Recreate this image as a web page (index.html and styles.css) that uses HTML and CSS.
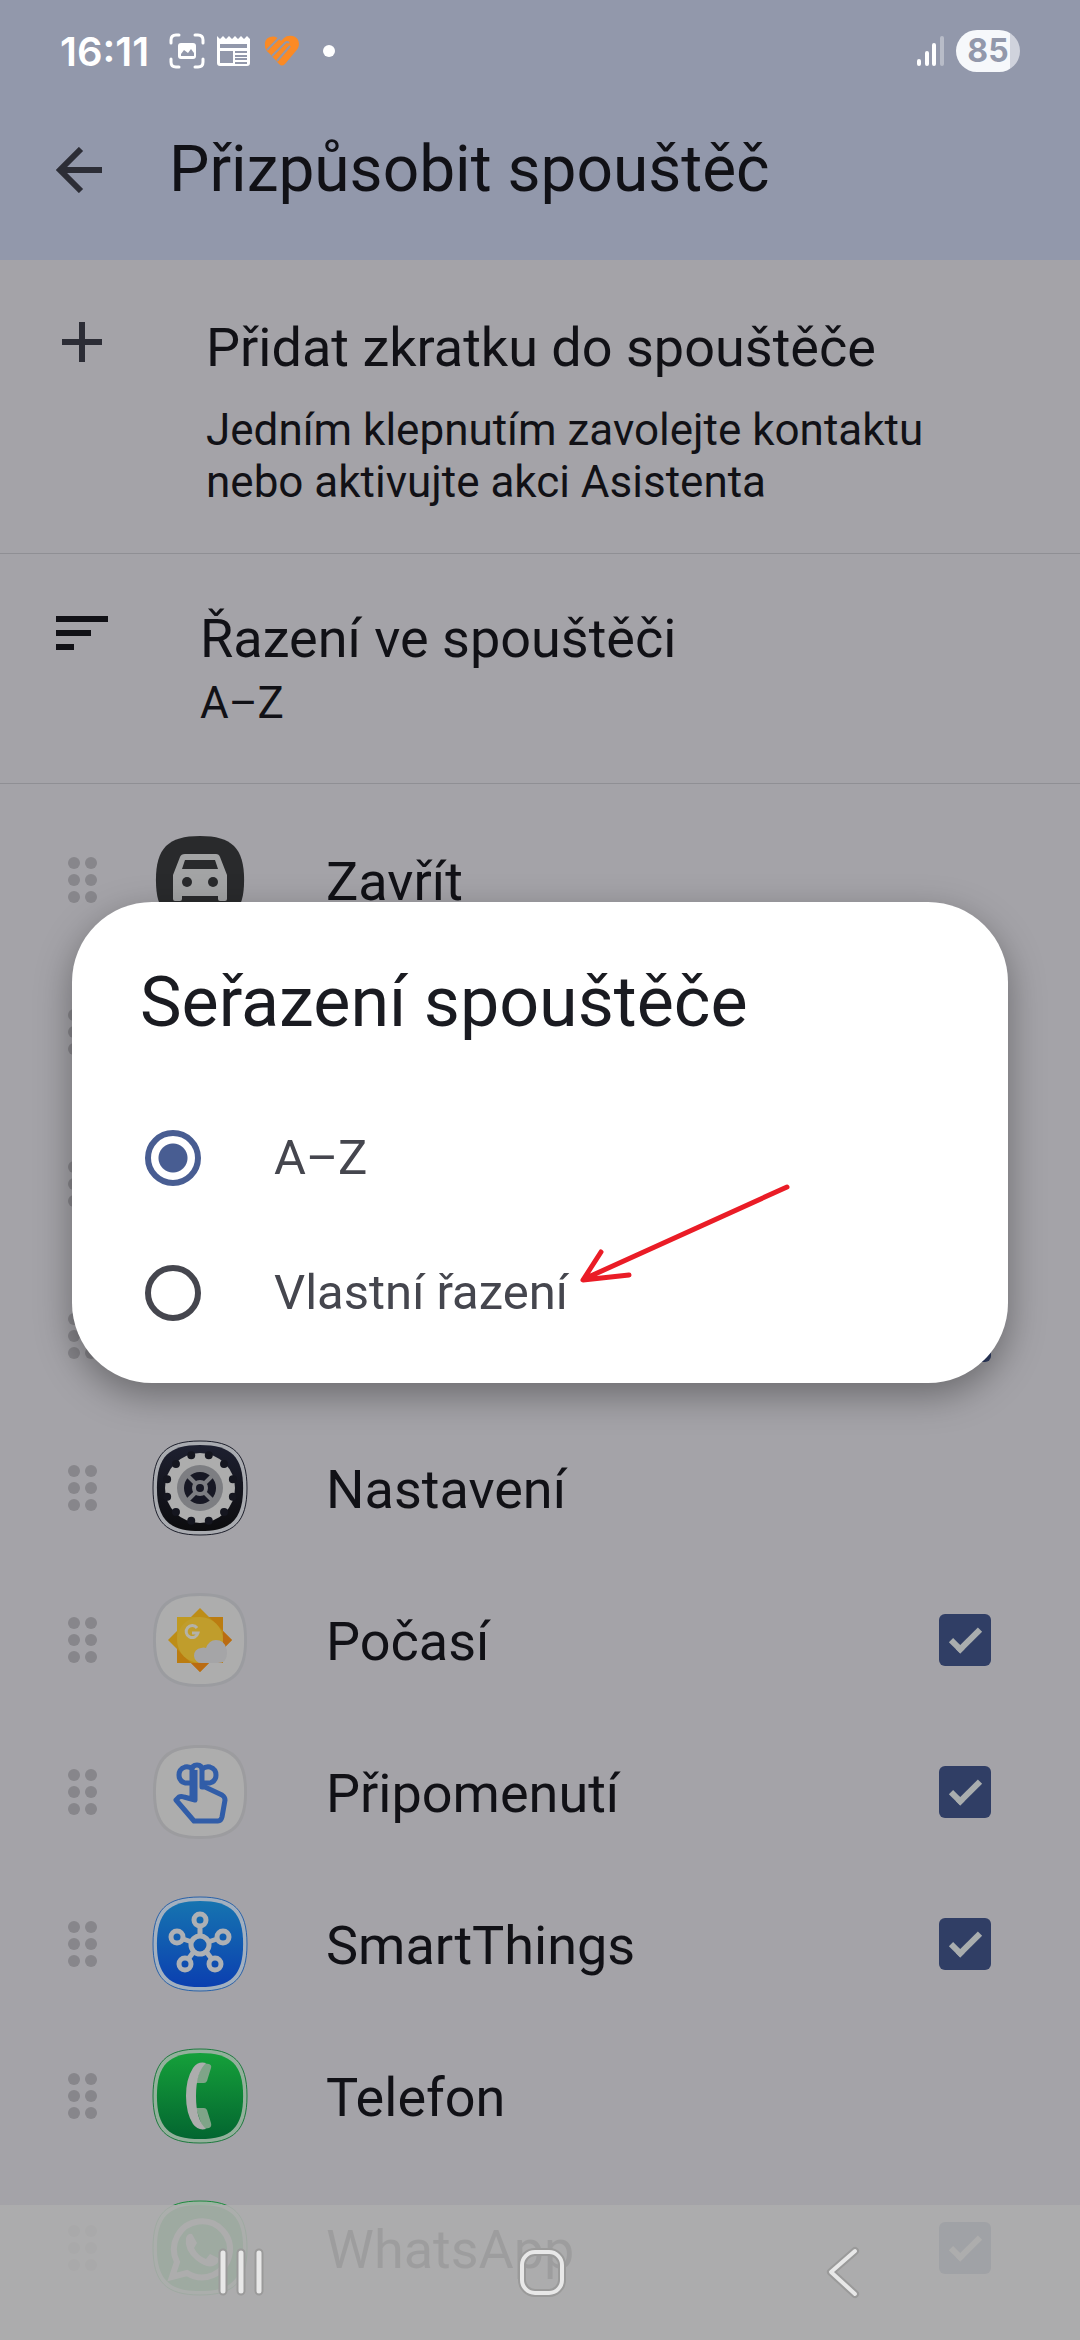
FILE: index.html
```
<!DOCTYPE html>
<html lang="cs">

<head>
    <meta charset="UTF-8">
    <meta name="viewport" content="width=device-width, initial-scale=1.0">
    <title>Přizpůsobit spouštěč</title>
    <link rel="stylesheet" href="styles.css">
</head>

<body>

    <!-- shared shapes -->
    <svg class="defs" aria-hidden="true">
        <defs>
            <linearGradient id="dark" x1="0" y1="0" x2="0" y2="1">
                <stop offset="0" stop-color="#1e2030" />
                <stop offset="1" stop-color="#0c0c0e" />
            </linearGradient>
            <linearGradient id="blue" x1="0" y1="0" x2="0" y2="1">
                <stop offset="0" stop-color="#1674b0" />
                <stop offset="1" stop-color="#0b3fb0" />
            </linearGradient>
            <linearGradient id="green" x1="0" y1="0" x2="0" y2="1">
                <stop offset="0" stop-color="#15a03a" />
                <stop offset="1" stop-color="#036530" />
            </linearGradient>
            <path id="squircle" d="M48 1C14 1 1 14 1 48s13 47 47 47 47-13 47-47S82 1 48 1z" />
            <g id="dots">
                <circle cx="6" cy="6" r="6" />
                <circle cx="23" cy="6" r="6" />
                <circle cx="6" cy="23" r="6" />
                <circle cx="23" cy="23" r="6" />
                <circle cx="6" cy="40" r="6" />
                <circle cx="23" cy="40" r="6" />
            </g>
        </defs>
    </svg>

    <header class="top">
        <div class="status">
            <span class="time">16:11</span>
            <svg width="36" height="36" viewBox="0 0 36 36" fill="none" stroke="#fff" stroke-width="3" stroke-linecap="round">
                <path d="M2 10V7q0-5 5-5h3M26 2h3q5 0 5 5v3M34 26v3q0 5-5 5h-3M10 34H7q-5 0-5-5v-3" />
                <rect x="9" y="10" width="18" height="16" rx="3" fill="#fff" stroke="none" />
                <path d="M12 23v-2l3-4 4 3 3-4 3 4v3z" fill="#9298ab" stroke="none" />
            </svg>
            <svg class="news" width="34" height="32" viewBox="0 0 34 32">
                <path d="M0 1l3 3 3-3 3 3 3-3 3 3 3-3 3 3 3-3 3 3 3-3 3 3V28q0 3-3 3H3q-3 0-3-3z" fill="#fff" />
                <path d="M3 9h27v4H3zM3 16h13v12H3z" fill="#9298ab" />
                <path d="M18 17h12M18 21h12M18 24h12M18 28h12" stroke="#9298ab" stroke-width="2" />
            </svg>
            <svg width="36" height="32" viewBox="0 0 36 32" fill="none">
                <path d="M18 6q-5-6-11-4-6 2-5 9 0 4 4 7l10 11q3 3 6 0l10-12q4-4 4-8 0-6-6-8-6-1-9 2z" fill="#fb8a24" />
                <path d="M4 15L16 3M9 21L22 8q2-2 4 0M14 26L27 11" stroke="#9298ab" stroke-width="2" />
            </svg>
            <span class="more"></span>
            <svg class="signal" width="28" height="32" viewBox="0 0 28 32" stroke="#fff" stroke-width="4" stroke-linecap="round">
                <path d="M3 26v3M11 18v11M18 10v19" />
                <path d="M26 3v26" stroke-opacity=".35" />
            </svg>
            <span class="battery">85</span>
        </div>
        <div class="toolbar">
            <button class="back" aria-label="Zpět">
                <svg width="46" height="46" viewBox="0 0 46 46" fill="none" stroke="#2c2d36" stroke-width="6">
                    <path d="M46 23H4M25 2L4 23l21 21" />
                </svg>
            </button>
            <h1>Přizpůsobit spouštěč</h1>
        </div>
    </header>

    <main>
        <section class="item add">
            <svg class="item-icon" width="52" height="52" viewBox="0 0 52 52" stroke="#2c2d36" stroke-width="6">
                <path d="M26 6v40M6 26h40" />
            </svg>
            <div>
                <h2>Přidat zkratku do spouštěče</h2>
                <p>Jedním klepnutím zavolejte kontaktu nebo aktivujte akci Asistenta</p>
            </div>
        </section>

        <section class="item sort">
            <svg class="item-icon" width="52" height="36" viewBox="0 0 52 36" fill="#111116">
                <path d="M0 0h52v6H0zM0 14h35v6H0zM0 28h18v6H0z" />
            </svg>
            <div>
                <h2>Řazení ve spouštěči</h2>
                <p>A–Z</p>
            </div>
        </section>

        <ul class="apps">
            <li class="app">
                <svg class="handle" viewBox="0 0 29 46"><use href="#dots" /></svg>
                <svg class="app-icon" viewBox="0 0 96 96">
                    <use href="#squircle" fill="#292a2c" transform="translate(3 3) scale(.938)" />
                    <path d="M33 22h31q3 0 4 3l7 18v24q0 2-2 2h-5q-2 0-2-2v-3H30v3q0 2-2 2h-5q-2 0-2-2V43l7-18q1-3 5-3z" fill="#a3a4a5" />
                    <path d="M33 28h30l3 9H30z" fill="#292a2c" />
                    <circle cx="35" cy="50" r="5" fill="#292a2c" />
                    <circle cx="61" cy="50" r="5" fill="#292a2c" />
                </svg>
                <span class="name">Zavřít</span>
            </li>
            <li class="app">
                <svg class="handle" viewBox="0 0 29 46"><use href="#dots" /></svg>
            </li>
            <li class="app">
                <svg class="handle" viewBox="0 0 29 46"><use href="#dots" /></svg>
            </li>
            <li class="app">
                <svg class="handle" viewBox="0 0 29 46"><use href="#dots" /></svg>
                <span class="name"></span>
                <input type="checkbox" class="check" aria-label="Zobrazit aplikaci" checked>
            </li>
            <li class="app">
                <svg class="handle" viewBox="0 0 29 46"><use href="#dots" /></svg>
                <svg class="app-icon" viewBox="0 0 96 96">
                    <use href="#squircle" fill="#a9abb0" stroke="#1d1f2b" />
                    <use href="#squircle" fill="url(#dark)" transform="translate(4 4) scale(.917)" />
                    <circle cx="48" cy="48" r="35" fill="#adadad" />
                    <circle cx="48" cy="48" r="34" fill="none" stroke="#15161f" stroke-width="8" stroke-linecap="round" pathLength="12" stroke-dasharray="0 1" stroke-dashoffset=".5" />
                    <circle cx="48" cy="48" r="23" fill="#7d7e82" />
                    <circle cx="48" cy="48" r="16" fill="#171824" />
                    <path d="M36 36l24 24M60 36L36 60" stroke="#7d7e82" stroke-width="4" />
                    <circle cx="48" cy="48" r="8" fill="#7d7e82" />
                    <circle cx="48" cy="48" r="4" fill="#171824" />
                </svg>
                <span class="name">Nastavení</span>
            </li>
            <li class="app">
                <svg class="handle" viewBox="0 0 29 46"><use href="#dots" /></svg>
                <svg class="app-icon" viewBox="0 0 96 96">
                    <use href="#squircle" fill="#9b9ca0" />
                    <use href="#squircle" fill="#adadad" transform="translate(3 3) scale(.938)" />
                    <path d="M25 25h46v46H25z" fill="#bb7c10" />
                    <path d="M48 16l32 32-32 32-32-32z" fill="#bd8d17" />
                    <path d="M71 39l9 9-9 9zM39 71h18l-9 9z" fill="#ba6b12" />
                    <path d="M25 25h23v23H25z" fill="#c09a21" />
                    <circle cx="48" cy="48" r="23" fill="#c09d2c" />
                    <path d="M45 36a6 6 0 1 0 1 5h-6" fill="none" stroke="#b4b2a8" stroke-width="3" />
                    <path d="M50 71a7 7 0 0 1-1-15q3-1 5 0 3-8 10-8 8 0 10 8 1 1 1 5 0 10-9 10z" fill="#a5a5a7" />
                </svg>
                <label class="name" for="pocasi">Počasí</label>
                <input type="checkbox" class="check" id="pocasi" checked>
            </li>
            <li class="app">
                <svg class="handle" viewBox="0 0 29 46"><use href="#dots" /></svg>
                <svg class="app-icon" viewBox="0 0 96 96">
                    <use href="#squircle" fill="#9c9c9f" />
                    <use href="#squircle" fill="#adadad" transform="translate(3 3) scale(.938)" />
                    <g fill="none" stroke="#315da8" stroke-width="5" stroke-linejoin="round">
                        <path d="M41 25q-4-3-8-2-6 2-6 8t6 8h7M50 25q4-3 8-2 6 2 6 8t-6 8h-7" />
                        <path d="M40 53V26q0-5 5-5t5 5v17h3l17 8q3 2 3 5l-3 17q-1 4-4 4H42L24 56l3-3q2-1 5 0l11 3V26" />
                    </g>
                </svg>
                <label class="name" for="pripomenuti">Připomenutí</label>
                <input type="checkbox" class="check" id="pripomenuti" checked>
            </li>
            <li class="app">
                <svg class="handle" viewBox="0 0 29 46"><use href="#dots" /></svg>
                <svg class="app-icon" viewBox="0 0 96 96">
                    <use href="#squircle" fill="#a3b0bf" stroke="#2a62a8" />
                    <use href="#squircle" fill="url(#blue)" transform="translate(4 4) scale(.917)" />
                    <g fill="none" stroke="#adb0b4" stroke-width="5">
                        <path d="M48 31v9M31 43l9 3M65 43l-9 3M37 62l6-8M59 62l-6-8" />
                        <circle cx="48" cy="49" r="9" />
                        <circle cx="48" cy="24" r="6" />
                        <circle cx="25" cy="41" r="6" />
                        <circle cx="71" cy="41" r="6" />
                        <circle cx="33" cy="68" r="6" />
                        <circle cx="63" cy="68" r="6" />
                    </g>
                </svg>
                <label class="name" for="smartthings">SmartThings</label>
                <input type="checkbox" class="check" id="smartthings" checked>
            </li>
            <li class="app">
                <svg class="handle" viewBox="0 0 29 46"><use href="#dots" /></svg>
                <svg class="app-icon" viewBox="0 0 96 96">
                    <use href="#squircle" fill="#94b09c" stroke="#1d7a3e" />
                    <use href="#squircle" fill="url(#green)" transform="translate(4 4) scale(.917)" />
                    <path d="M50 15l7 1q3 1 2 4l-4 13q-1 2-3 2h-8zM44 60h8q2 0 3 2l4 13q1 4-2 5l-6 1z" fill="#7fa488" />
                    <path d="M54 15Q44 24 44 48t10 33Q46 83 41 76 34 65 34 48t7-28q5-7 13-5z" fill="#adadad" />
                </svg>
                <span class="name">Telefon</span>
            </li>
            <li class="app">
                <svg class="handle" viewBox="0 0 29 46"><use href="#dots" /></svg>
                <svg class="app-icon" viewBox="0 0 96 96">
                    <use href="#squircle" fill="#9db3a2" stroke="#1d8a3e" />
                    <use href="#squircle" fill="#178a35" transform="translate(4 4) scale(.917)" />
                    <path d="M20 77l5-15a28 28 0 1 1 10 11z" fill="none" stroke="#adadad" stroke-width="6" />
                    <path d="M34 38q2-5 6-4l5 9-3 5q4 8 12 11l4-5 8 4q2 5-5 8-7 2-17-6-12-10-10-22z" fill="#adadad" />
                </svg>
                <label class="name" for="whatsapp">WhatsApp</label>
                <input type="checkbox" class="check" id="whatsapp" checked>
            </li>
        </ul>
    </main>

    <div class="overlay">
        <form class="dialog" role="dialog" aria-labelledby="dialog-title">
            <h2 id="dialog-title">Seřazení spouštěče</h2>
            <label class="option">
                <input type="radio" name="razeni" checked>
                <span>A–Z</span>
            </label>
            <label class="option">
                <input type="radio" name="razeni">
                <span>Vlastní řazení</span>
            </label>
            <svg class="arrow" width="212" height="104" viewBox="0 0 212 104" aria-hidden="true">
                <path d="M207 5L4 97M21 70L3 98l46-5" fill="none" stroke="#ea1c26" stroke-width="5" stroke-linecap="round" stroke-linejoin="round" />
            </svg>
        </form>
    </div>

    <nav class="navbar">
        <button aria-label="Poslední aplikace">
            <svg width="52" height="56" viewBox="0 0 52 56" fill="none" stroke-linecap="round">
                <path d="M8 8v38M26 8v38M44 8v38" stroke="#9a9a9a" stroke-width="9" />
                <path d="M8 8v38M26 8v38M44 8v38" stroke="#e8e8e8" stroke-width="5" />
            </svg>
        </button>
        <button aria-label="Domů">
            <svg width="56" height="56" viewBox="0 0 56 56" fill="none">
                <rect x="8" y="7" width="40" height="41" rx="13" stroke="#9a9a9a" stroke-width="8" />
                <rect x="8" y="7" width="40" height="41" rx="13" stroke="#e8e8e8" stroke-width="4" />
            </svg>
        </button>
        <button aria-label="Zpět">
            <svg width="40" height="56" viewBox="0 0 40 56" fill="none" stroke-linecap="round" stroke-linejoin="round">
                <path d="M32 6L8 27l24 22" stroke="#9a9a9a" stroke-width="8" />
                <path d="M32 6L8 27l24 22" stroke="#e8e8e8" stroke-width="4" />
            </svg>
        </button>
    </nav>

</body>

</html>
```

FILE: styles.css
```
* {
    box-sizing: border-box;
}

body {
    margin: 0;
    min-height: 100vh;
    background-color: #a4a3a8;
    color: #111116;
    font-family: Roboto, "Noto Sans", sans-serif;
}

h1,
h2,
p {
    margin: 0;
    font-weight: 400;
}

button {
    display: flex;
    align-items: center;
    justify-content: center;
    padding: 0;
    border: none;
    background: none;
    cursor: pointer;
}

svg {
    flex-shrink: 0;
}

.defs {
    position: absolute;
    width: 0;
    height: 0;
}

/* top bar */

.top {
    height: 260px;
    background-color: #9298ab;
}

.status {
    display: flex;
    align-items: center;
    height: 102px;
    padding: 0 60px;
    color: #fff;
}

.time {
    width: 97px;
    margin-right: 12px;
    font-family: Inter, sans-serif;
    font-size: 40px;
    font-weight: 600;
}

.news {
    margin: 0 12px;
}

.more {
    width: 12px;
    height: 12px;
    margin-left: 24px;
    border-radius: 50%;
    background-color: #fff;
}

.signal {
    margin-left: auto;
    margin-right: 12px;
}

.battery {
    width: 64px;
    height: 42px;
    border-radius: 21px;
    background: linear-gradient(to right, #f6f8fb 85%, #d0d3dd 85%);
    color: #9298ab;
    font-family: Inter, sans-serif;
    font-size: 32px;
    font-weight: 700;
    line-height: 42px;
    text-align: center;
}

.toolbar {
    display: flex;
    align-items: center;
    height: 136px;
    padding-left: 56px;
}

.back {
    width: 46px;
    margin-right: 67px;
}

h1 {
    font-size: 64px;
    line-height: 76px;
}

/* settings rows */

.item {
    display: flex;
    border-bottom: 1px solid #8f8f94;
}

.item h2 {
    font-size: 54px;
    line-height: 64px;
}

.item p {
    font-size: 44px;
    line-height: 52px;
}

.add {
    height: 294px;
    padding: 56px 120px 0 56px;
}

.add .item-icon {
    margin-right: 98px;
}

.add p {
    margin-top: 24px;
}

.sort {
    height: 230px;
    padding: 53px 56px 0;
}

.sort .item-icon {
    margin: 9px 92px 0 0;
}

.sort p {
    margin-top: 6px;
}

/* app list */

.apps {
    margin: 0;
    padding: 20px 89px 0 68px;
    list-style: none;
}

.app {
    display: flex;
    align-items: center;
    height: 152px;
}

.handle {
    width: 29px;
    height: 46px;
    fill: #87868b;
}

.app-icon {
    width: 96px;
    height: 96px;
    margin-left: 55px;
}

.name {
    flex: 1;
    margin-left: 78px;
    padding-top: 4px;
    font-size: 54px;
    line-height: 64px;
}

.check {
    display: flex;
    align-items: center;
    justify-content: center;
    width: 52px;
    height: 52px;
    margin: 0;
    border-radius: 6px;
    background-color: #303e65;
    appearance: none;
}

.check:checked::after {
    content: "";
    width: 25px;
    height: 10px;
    margin-bottom: 6px;
    border: solid #a9adae;
    border-width: 0 0 6px 6px;
    transform: rotate(-45deg);
}

/* dialog */

.overlay {
    position: fixed;
    inset: 80px 0 135px;
    display: flex;
    align-items: center;
    padding: 0 72px;
}

.dialog {
    position: relative;
    flex: 1;
    padding: 60px 68px 23px;
    border-radius: 80px;
    background-color: #fff;
    box-shadow: 0 12px 36px rgba(0, 0, 0, 0.35);
}

.dialog h2 {
    margin-bottom: 48px;
    color: #1a1b21;
    font-size: 70px;
    line-height: 80px;
}

.option {
    display: flex;
    align-items: center;
    height: 135px;
    color: #45464e;
    font-size: 49px;
}

.option input {
    width: 56px;
    height: 56px;
    margin: 0 73px 0 5px;
    border: 6px solid #45464e;
    border-radius: 50%;
    appearance: none;
}

.option input:checked {
    border-color: #485d92;
    background: radial-gradient(circle, #485d92 14px, transparent 15px);
}

.arrow {
    position: absolute;
    left: 508px;
    top: 280px;
}

/* system navigation */

.navbar {
    position: fixed;
    left: 0;
    right: 0;
    bottom: 0;
    display: flex;
    height: 135px;
    padding: 0 86px 0 90px;
    background-color: rgba(173, 173, 173, 0.9);
}

.navbar button {
    flex: 1;
}
```
